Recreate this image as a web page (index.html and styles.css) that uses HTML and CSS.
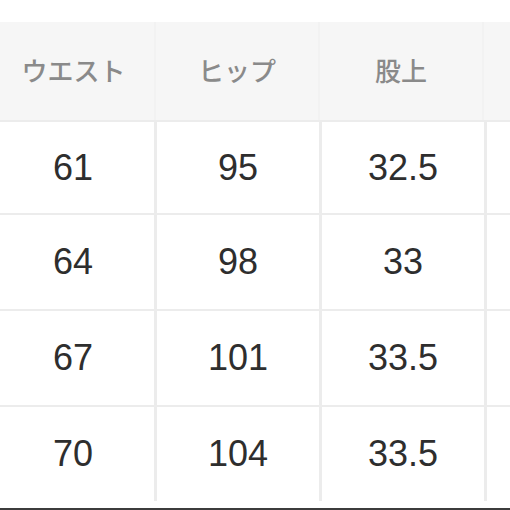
FILE: index.html
```html
<!DOCTYPE html>
<html lang="ja">
<head>
<meta charset="utf-8">
<link rel="stylesheet" href="styles.css">
</head>
<body>
<div class="page">
  <div class="table">
    <div class="row head">
      <div class="cell">ウエスト</div>
      <div class="cell">ヒップ</div>
      <div class="cell">股上</div>
      <div class="cell"></div>
    </div>
    <div class="row r1">
      <div class="cell">61</div>
      <div class="cell">95</div>
      <div class="cell">32.5</div>
      <div class="cell"></div>
    </div>
    <div class="row">
      <div class="cell">64</div>
      <div class="cell">98</div>
      <div class="cell">33</div>
      <div class="cell"></div>
    </div>
    <div class="row">
      <div class="cell">67</div>
      <div class="cell">101</div>
      <div class="cell">33.5</div>
      <div class="cell"></div>
    </div>
    <div class="row">
      <div class="cell">70</div>
      <div class="cell">104</div>
      <div class="cell">33.5</div>
      <div class="cell"></div>
    </div>
  </div>
  <div class="edge"></div>
</div>
</body>
</html>
```
FILE: styles.css
```css
html, body {
  margin: 0;
  padding: 0;
  background: #ffffff;
  overflow: hidden;
}
.page {
  width: 510px;
  height: 510px;
  overflow: hidden;
  padding-top: 22px;
  box-sizing: border-box;
  display: flex;
  flex-direction: column;
}
.table {
  display: flex;
  flex-direction: column;
  row-gap: 2px;
  background: #ececec;
  margin-left: -8px;
  width: 700px;
}
.row {
  display: grid;
  grid-template-columns: repeat(4, 162px);
  column-gap: 3px;
  height: 94px;
}
.row.r1 {
  height: 91px;
}
.row.head {
  height: 98px;
  background: #f2f2f2;
  column-gap: 2px;
  padding-right: 4px;
}
.cell {
  background: #ffffff;
  display: flex;
  align-items: center;
  justify-content: center;
  font-family: "Liberation Sans", Arial, sans-serif;
  font-size: 36px;
  color: #2e2e2e;
}
.head .cell {
  background: #f6f6f6;
  font-family: "Noto Sans CJK JP", "Noto Sans", sans-serif;
  font-size: 26px;
  font-weight: 500;
  color: #8a8a8a;
  padding-bottom: 4px;
}
.head .cell:first-child {
  padding-left: 1px;
}
.edge {
  margin-top: auto;
  height: 2px;
  background: #3c3c3c;
  flex-shrink: 0;
}
```
